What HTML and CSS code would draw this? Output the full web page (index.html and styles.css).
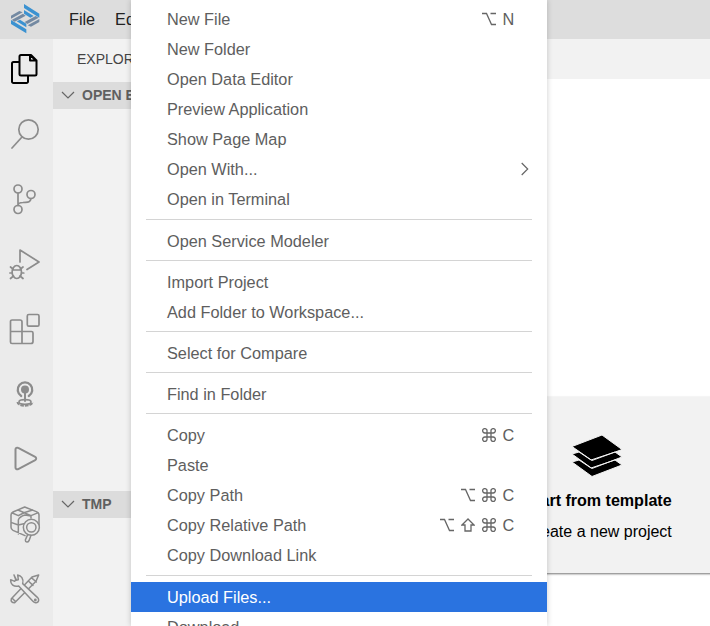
FILE: index.html
```html
<!DOCTYPE html>
<html lang="en">
<head>
<meta charset="utf-8">
<title>Workspace</title>
<link rel="stylesheet" href="styles.css">
</head>
<body>
<div class="app">
  <header class="menubar">
    <svg class="logo" width="32" height="32" viewBox="30 9 96 96">
      <g fill="#3b92d1"><path d="M72 12l46 29v12L72 24zM72 30l29 18-10 5-19-12zM79 100L33 72V60l46 28zM79 82L50 64l10-5 19 12z"/></g>
      <g fill="#7389a2"><path d="M33 47l25-14 10 4-35 19zM35 60l34-19 8 6-33 18zM118 66L93 80l-10-4 35-19zM116 53L82 72l-8-6 33-18z"/></g>
    </svg>
    <span>File</span><span>Edit</span>
  </header>
  <main class="workbench">
    <nav class="activity">
      <div class="slot"><svg class="active" width="32" height="36" viewBox="0 0 32 36"><path d="M10 10H4.500a1.500 1.500 0 0 0-1.500 1.500v18a1.500 1.500 0 0 0 1.500 1.500h13a1.500 1.500 0 0 0 1.500-1.500v-5.500M12 3h10l5.500 5.500v13.500a1.500 1.500 0 0 1-1.500 1.500H12a1.500 1.500 0 0 1-1.500-1.500V4.500a1.500 1.500 0 0 1 1.500-1.500zM21 3v5.500h6z"/></svg></div>
      <div class="slot"><svg width="32" height="36" viewBox="0 0 32 36"><circle cx="19.500" cy="13.500" r="9.700"/><path d="M13 21L3 32"/></svg></div>
      <div class="slot"><svg width="32" height="36" viewBox="0 0 32 36"><circle cx="9" cy="8" r="4"/><circle cx="9" cy="28.500" r="4"/><circle cx="22" cy="13.500" r="4"/><path d="M9 12v12.500M22 17.500c-1 5-4 3.500-8 4-3 0-5 1-5 3"/></svg></div>
      <div class="slot"><svg width="32" height="36" viewBox="0 0 32 36"><path d="M11 16V4L30 16 18 23.500"/><ellipse cx="7.800" cy="26" rx="4.700" ry="6.500"/><path d="M3.500 24h8.600M.8 27h2.200M12.600 27h2.200M1.500 21l2.500 2M14 21l-2.500 2M1.500 32.500l3-2.500M14 32.500l-3-2.500"/></svg></div>
      <div class="slot"><svg width="32" height="36" viewBox="0 0 32 36"><rect x="18.300" y="3.500" width="11.700" height="11.700" rx="1.500"/><path d="M3 9h8a2 2 0 0 1 2 2v9.500h9.500a1.500 1.500 0 0 1 1.500 1.500v8.500a2 2 0 0 1-2 2H3a1.500 1.500 0 0 1-1.500-1.500V10.500A1.500 1.500 0 0 1 3 9zM1.500 20.500H13v12"/></svg></div>
      <div class="slot"><svg width="32" height="36" viewBox="0 0 32 36"><path stroke-width="2.300" d="M12.200 20a7.300 7.300 0 1 1 7.600 0"/><circle cx="16" cy="13.500" r="4" fill="#8c8c8c" stroke="none"/><path stroke-width="2" d="M16 14v11"/><ellipse cx="16" cy="26" rx="6" ry="2.300"/><path stroke-width="2" stroke-linecap="butt" stroke-dasharray="3.500 1" d="M8.500 26c0 5 15 5 15 0"/></svg></div>
      <div class="slot"><svg width="32" height="36" viewBox="0 0 32 36"><path stroke-width="2" d="M6.500 8.500v18a1.800 1.800 0 0 0 2.700 1.600l17-9a1.800 1.800 0 0 0 0-3.200l-17-9A1.800 1.800 0 0 0 6.500 8.500z"/></svg></div>
      <div class="slot"><svg class="fine" width="32" height="40" viewBox="27 55 96 120"><path d="M74 64L109 78q8 3 8 10v40M75 150L39 134q-6-3-6-9V88q0-6 6-9l35-15M37 82l18 8q18-11 43-17M54 73l39 17 22-9M55 145v-42q3-10 20-15l18 3M33 110l22 8 16-4M93 90v7"/><circle cx="94" cy="125" r="24" fill="#ebebeb"/><circle cx="94" cy="125" r="14"/><path d="M83 147l-7 16c0 8 8 8 11 2l6-16"/></svg></div>
      <div class="slot"><svg class="fine" width="32" height="36" viewBox="27 256 96 108"><path d="M116 268l-20 6-62 65q-3 12 10 12l64-64zM94 276l15 13M36 337l11 11M85 286l14 13"/><path fill="#ebebeb" d="M42 268l6 12-4 7-12-5c-1 14 10 23 24 19l42 45c11 13 25 0 14-11L68 294c4-14-5-25-15-26l2 14-7 2-6-16z"/><circle cx="106" cy="343" r="2"/></svg></div>
    </nav>
    <aside class="sidebar">
      <div class="title">EXPLORER</div>
      <div class="section"><svg width="14" height="10" viewBox="0 0 14 10"><path d="M1 2l6 6 6-6"/></svg>OPEN EDITORS</div>
      <div class="blank"></div>
      <div class="section"><svg width="14" height="10" viewBox="0 0 14 10"><path d="M1 2l6 6 6-6"/></svg>TMP</div>
    </aside>
    <section class="editor">
      <div class="tabs"></div>
      <article class="card">
        <svg width="50" height="42" viewBox="0 0 50 42"><path d="M0 27l7-2 12 8 24-8 7 5-30 11.500zM0 19l7-2 12 8 24-8 7 5-30 11.500zM0 11.500L30 0l20 14.500-30 11z"/></svg>
        <h2>Start from template</h2>
        <p>Create a new project</p>
      </article>
    </section>
  </main>
</div>
<svg class="defs"><defs>
  <symbol id="opt" viewBox="0 0 14 14"><path d="M0 1.500h4.500l5 11H14M8.500 1.500H14"/></symbol>
  <symbol id="cmd" viewBox="0 0 14 14"><path d="M5 5V3.200A2.200 2.200 0 1 0 2.800 5h8.400A2.200 2.200 0 1 0 9 3.200v7.600A2.200 2.200 0 1 0 11.200 9H2.800A2.200 2.200 0 1 0 5 10.800z"/></symbol>
  <symbol id="shift" viewBox="0 0 14 14"><path d="M7 1L1 7h3v6h6V7h3z"/></symbol>
</defs></svg>
<div class="menu">
  <div class="item">New File<kbd><svg><use href="#opt"/></svg><b>N</b></kbd></div>
  <div class="item">New Folder</div>
  <div class="item">Open Data Editor</div>
  <div class="item">Preview Application</div>
  <div class="item">Show Page Map</div>
  <div class="item">Open With...<svg class="more" width="8" height="14" viewBox="0 0 8 14"><path d="M.7 1l6 6-6 6"/></svg></div>
  <div class="item">Open in Terminal</div>
  <div class="rule"></div>
  <div class="item">Open Service Modeler</div>
  <div class="rule"></div>
  <div class="item">Import Project</div>
  <div class="item">Add Folder to Workspace...</div>
  <div class="rule"></div>
  <div class="item">Select for Compare</div>
  <div class="rule"></div>
  <div class="item">Find in Folder</div>
  <div class="rule"></div>
  <div class="item">Copy<kbd><svg><use href="#cmd"/></svg><b>C</b></kbd></div>
  <div class="item">Paste</div>
  <div class="item">Copy Path<kbd><svg><use href="#opt"/></svg><svg><use href="#cmd"/></svg><b>C</b></kbd></div>
  <div class="item">Copy Relative Path<kbd><svg><use href="#opt"/></svg><svg><use href="#shift"/></svg><svg><use href="#cmd"/></svg><b>C</b></kbd></div>
  <div class="item">Copy Download Link</div>
  <div class="rule"></div>
  <div class="item selected">Upload Files...</div>
  <div class="item">Download</div>
</div>
</body>
</html>
```
FILE: styles.css
```css
* { box-sizing: border-box; }
body { margin: 0; height: 626px; overflow: hidden; position: relative; background: #fff; font: 16.2px "Liberation Sans", Arial, sans-serif; }
svg { fill: none; flex: none; }
.defs { position: absolute; width: 0; height: 0; }
.app { height: 626px; display: flex; flex-direction: column; overflow: hidden; }
.menubar { height: 39px; flex: none; background: #ddd; display: flex; align-items: center; padding: 0 0 1px 10px; color: #222; }
.menubar span { margin-right: 20px; }
.logo { margin: 0 27px 0 0; }
.workbench { flex: 1; min-height: 0; display: flex; }
.activity { width: 53px; flex: none; background: #ebebeb; padding-left: 9px; }
.slot { height: 65px; display: flex; align-items: center; }
.slot svg { stroke: #8c8c8c; stroke-width: 1.7; stroke-linejoin: round; stroke-linecap: round; }
.slot svg.fine { stroke-width: 4.5; }
.slot svg.active { stroke: #000; stroke-width: 2; }
.slot:first-child { height: 62px; }
.sidebar { width: 250px; flex: none; background: #f2f2f2; display: flex; flex-direction: column; color: #555; }
.title { height: 43px; line-height: 40px; padding-left: 24px; font-size: 14px; color: #444; }
.section { height: 27px; display: flex; align-items: center; gap: 7px; padding: 0 0 1px 8px; background: #dcdcdc; font-size: 14px; font-weight: bold; color: #606060; }
.section svg { stroke: #666; stroke-width: 1.2; }
.blank { height: 382px; }
.editor { flex: 1; min-width: 0; display: flex; flex-direction: column; overflow: hidden; }
.tabs { height: 40px; background: #f2f2f2; margin-bottom: 318px; flex: none; }
.card { height: 176px; width: 300px; margin-left: 144px; flex: none; background: #f2f2f2; box-shadow: 0 1px 2px rgba(0,0,0,.55); display: flex; flex-direction: column; align-items: center; padding-top: 38px; color: #000; }
.card svg { fill: #000; stroke: #f2f2f2; stroke-width: 1; }
.card h2 { margin: 13px 0 0; padding-left: 2px; font-size: 16.1px; line-height: 20px; letter-spacing: -.02px; white-space: nowrap; }
.card p { margin: 12px 0 0; padding-left: 2px; font-size: 16px; line-height: 20px; white-space: nowrap; }
.menu { position: absolute; left: 131px; top: 0; width: 415.5px; height: 626px; overflow: hidden; padding-top: 4.4px; background: #fff; color: #5e5e5e; box-shadow: 0 0 6px rgba(0,0,0,.2); }
.item { height: 30px; line-height: 30px; padding: 0 32px 0 36px; display: flex; align-items: center; justify-content: space-between; white-space: nowrap; font-size: 16.3px; }
.selected { background: #2a73e0; color: #fff; }
.rule { height: 1px; margin: 4.2px 15px 6px; background: #d4d4d4; }
kbd { display: flex; align-items: center; gap: 7px; font: inherit; }
kbd svg { width: 14px; height: 14px; stroke: #666; stroke-width: 1.3; }
kbd b { font-weight: normal; width: 12px; }
.more { margin-right: -14px; stroke: #666; stroke-width: 1.2; }
```
